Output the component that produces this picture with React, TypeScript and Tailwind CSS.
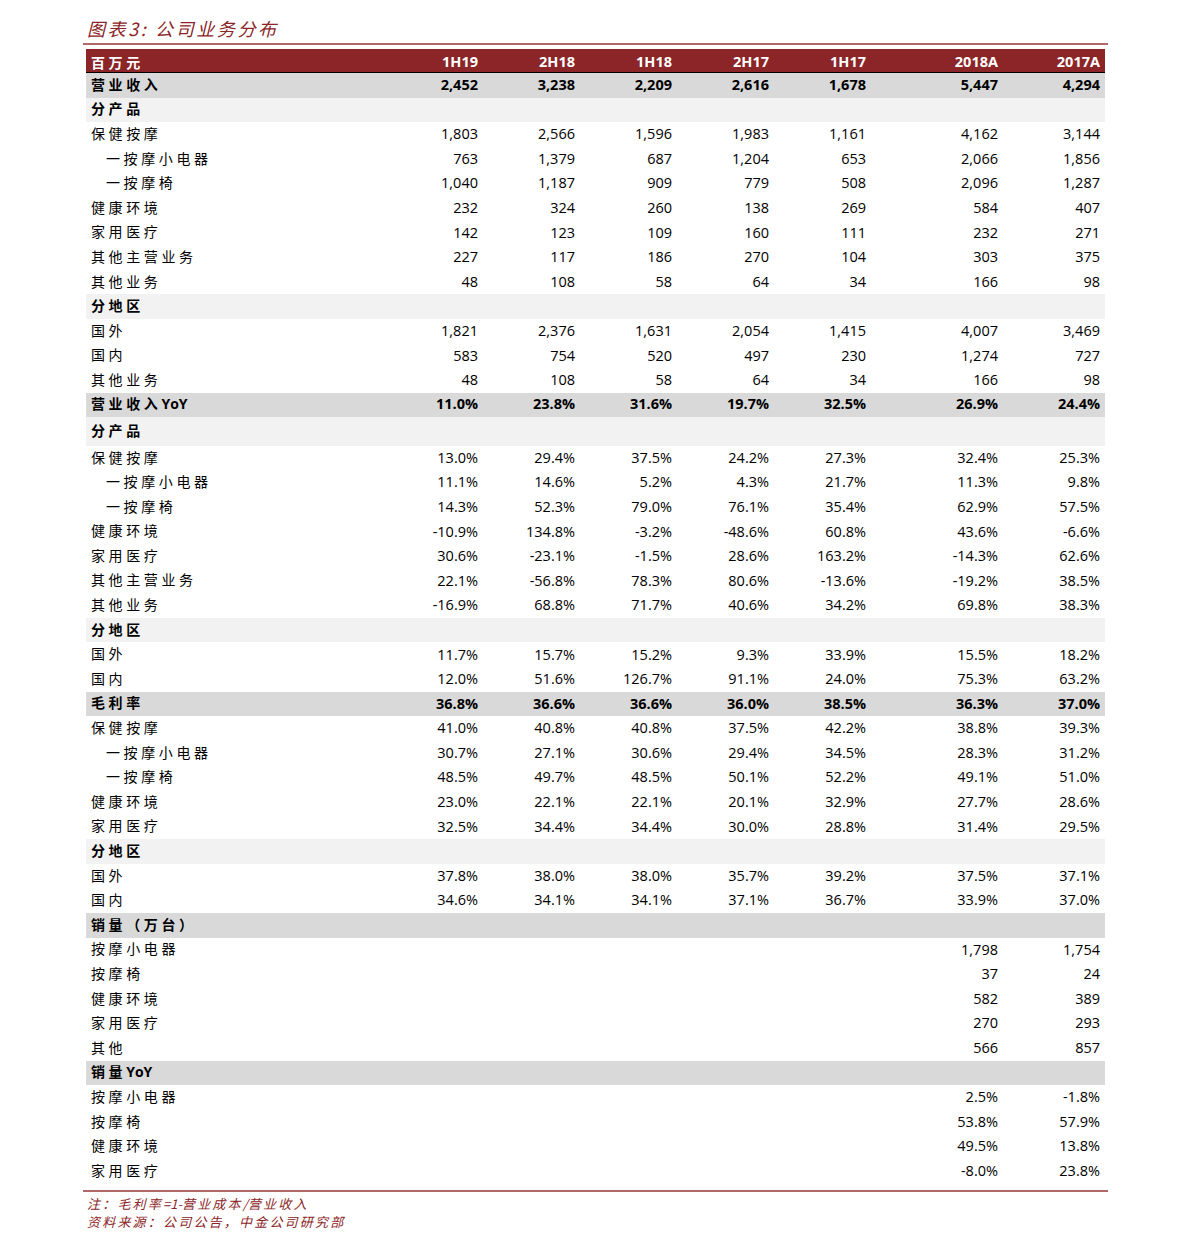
import React from 'react';

type Row = {
  label: string;
  kind: 'main' | 'sub' | 'data';
  vals?: string[];
  indent?: boolean;
  h?: string;
};

const cols = ['1H19', '2H18', '1H18', '2H17', '1H17', '2018A', '2017A'];
const colW = ['w-[97px]', 'w-[97px]', 'w-[97px]', 'w-[97px]', 'w-[97px]', 'w-[132px]', 'w-[102px]'];

const e = (a: string, b: string) => ['', '', '', '', '', a, b];

const rows: Row[] = [
  { label: '营业收入', kind: 'main', vals: ['2,452', '3,238', '2,209', '2,616', '1,678', '5,447', '4,294'] },
  { label: '分产品', kind: 'sub' },
  { label: '保健按摩', kind: 'data', vals: ['1,803', '2,566', '1,596', '1,983', '1,161', '4,162', '3,144'] },
  { label: '一按摩小电器', kind: 'data', indent: true, vals: ['763', '1,379', '687', '1,204', '653', '2,066', '1,856'] },
  { label: '一按摩椅', kind: 'data', indent: true, vals: ['1,040', '1,187', '909', '779', '508', '2,096', '1,287'] },
  { label: '健康环境', kind: 'data', vals: ['232', '324', '260', '138', '269', '584', '407'] },
  { label: '家用医疗', kind: 'data', vals: ['142', '123', '109', '160', '111', '232', '271'] },
  { label: '其他主营业务', kind: 'data', vals: ['227', '117', '186', '270', '104', '303', '375'] },
  { label: '其他业务', kind: 'data', vals: ['48', '108', '58', '64', '34', '166', '98'] },
  { label: '分地区', kind: 'sub' },
  { label: '国外', kind: 'data', vals: ['1,821', '2,376', '1,631', '2,054', '1,415', '4,007', '3,469'] },
  { label: '国内', kind: 'data', vals: ['583', '754', '520', '497', '230', '1,274', '727'] },
  { label: '其他业务', kind: 'data', vals: ['48', '108', '58', '64', '34', '166', '98'] },
  { label: '营业收入YoY', kind: 'main', h: 'h-[24px]', vals: ['11.0%', '23.8%', '31.6%', '19.7%', '32.5%', '26.9%', '24.4%'] },
  { label: '分产品', kind: 'sub', h: 'h-[29px]' },
  { label: '保健按摩', kind: 'data', vals: ['13.0%', '29.4%', '37.5%', '24.2%', '27.3%', '32.4%', '25.3%'] },
  { label: '一按摩小电器', kind: 'data', indent: true, vals: ['11.1%', '14.6%', '5.2%', '4.3%', '21.7%', '11.3%', '9.8%'] },
  { label: '一按摩椅', kind: 'data', indent: true, vals: ['14.3%', '52.3%', '79.0%', '76.1%', '35.4%', '62.9%', '57.5%'] },
  { label: '健康环境', kind: 'data', vals: ['-10.9%', '134.8%', '-3.2%', '-48.6%', '60.8%', '43.6%', '-6.6%'] },
  { label: '家用医疗', kind: 'data', vals: ['30.6%', '-23.1%', '-1.5%', '28.6%', '163.2%', '-14.3%', '62.6%'] },
  { label: '其他主营业务', kind: 'data', vals: ['22.1%', '-56.8%', '78.3%', '80.6%', '-13.6%', '-19.2%', '38.5%'] },
  { label: '其他业务', kind: 'data', vals: ['-16.9%', '68.8%', '71.7%', '40.6%', '34.2%', '69.8%', '38.3%'] },
  { label: '分地区', kind: 'sub' },
  { label: '国外', kind: 'data', vals: ['11.7%', '15.7%', '15.2%', '9.3%', '33.9%', '15.5%', '18.2%'] },
  { label: '国内', kind: 'data', vals: ['12.0%', '51.6%', '126.7%', '91.1%', '24.0%', '75.3%', '63.2%'] },
  { label: '毛利率', kind: 'main', vals: ['36.8%', '36.6%', '36.6%', '36.0%', '38.5%', '36.3%', '37.0%'] },
  { label: '保健按摩', kind: 'data', vals: ['41.0%', '40.8%', '40.8%', '37.5%', '42.2%', '38.8%', '39.3%'] },
  { label: '一按摩小电器', kind: 'data', indent: true, vals: ['30.7%', '27.1%', '30.6%', '29.4%', '34.5%', '28.3%', '31.2%'] },
  { label: '一按摩椅', kind: 'data', indent: true, vals: ['48.5%', '49.7%', '48.5%', '50.1%', '52.2%', '49.1%', '51.0%'] },
  { label: '健康环境', kind: 'data', vals: ['23.0%', '22.1%', '22.1%', '20.1%', '32.9%', '27.7%', '28.6%'] },
  { label: '家用医疗', kind: 'data', vals: ['32.5%', '34.4%', '34.4%', '30.0%', '28.8%', '31.4%', '29.5%'] },
  { label: '分地区', kind: 'sub' },
  { label: '国外', kind: 'data', vals: ['37.8%', '38.0%', '38.0%', '35.7%', '39.2%', '37.5%', '37.1%'] },
  { label: '国内', kind: 'data', vals: ['34.6%', '34.1%', '34.1%', '37.1%', '36.7%', '33.9%', '37.0%'] },
  { label: '销量（万台）', kind: 'main' },
  { label: '按摩小电器', kind: 'data', vals: e('1,798', '1,754') },
  { label: '按摩椅', kind: 'data', vals: e('37', '24') },
  { label: '健康环境', kind: 'data', vals: e('582', '389') },
  { label: '家用医疗', kind: 'data', vals: e('270', '293') },
  { label: '其他', kind: 'data', vals: e('566', '857') },
  { label: '销量YoY', kind: 'main' },
  { label: '按摩小电器', kind: 'data', vals: e('2.5%', '-1.8%') },
  { label: '按摩椅', kind: 'data', vals: e('53.8%', '57.9%') },
  { label: '健康环境', kind: 'data', vals: e('49.5%', '13.8%') },
  { label: '家用医疗', kind: 'data', vals: e('-8.0%', '23.8%') },
];

const cjk = "font-['Noto_Sans_CJK_SC',sans-serif]";
const num = "font-['Open_Sans','Noto_Sans_CJK_SC',sans-serif]";

function TableRow({ row }: { row: Row }) {
  const bg = row.kind === 'main' ? 'bg-[#d9d9d9]' : row.kind === 'sub' ? 'bg-[#f2f2f2]' : 'bg-white';
  const bold = row.kind !== 'data';
  return (
    <div className={`flex items-center ${row.h ?? 'h-[24.6px]'} ${bg} text-black`}>
      <div
        className={`w-[300px] pb-[3px] ${row.indent ? 'pl-[20px]' : 'pl-[5px]'} ${cjk} text-[14px] tracking-[3.6px] leading-none ${
          bold ? 'font-bold' : 'font-normal'
        }`}
      >
        {row.label.endsWith('YoY') ? (
          <>
            {row.label.replace('YoY', '')}
            <span className={`${num} tracking-normal`}>YoY</span>
          </>
        ) : (
          row.label
        )}
      </div>
      {(row.vals ?? ['', '', '', '', '', '', '']).map((v, i) => (
        <div
          key={i}
          className={`${colW[i]} pr-[5px] text-right ${num} text-[14.5px] leading-none ${bold ? 'font-bold' : 'font-normal'}`}
        >
          {v}
        </div>
      ))}
    </div>
  );
}

export default function App() {
  return (
    <div className="min-h-[1247px] w-[1191px] bg-white">
      <div className="pl-[86px] pr-[83px] pt-[15px]">
        <div className={`h-[28px] pl-[1px] ${cjk} text-[18px] italic leading-[26px] tracking-[2.6px] text-[#8b2527]`}>
          图表3: 公司业务分布
        </div>
        <div className="-ml-[3px] h-[2px] bg-[#b06868]" />
        <div className="mt-[4px] w-[1019px]">
          <div className="flex h-[24px] items-center border-b border-black bg-[#8b2527] pt-[3px] text-white">
            <div className={`w-[300px] pl-[5px] ${cjk} text-[14px] font-bold tracking-[3.6px] leading-none`}>百万元</div>
            {cols.map((c, i) => (
              <div key={c} className={`${colW[i]} pr-[5px] text-right ${num} text-[14.5px] font-bold leading-none`}>
                {c}
              </div>
            ))}
          </div>
          {rows.map((r, i) => (
            <TableRow key={i} row={r} />
          ))}
        </div>
        <div className="-ml-[3px] mt-[6px] h-[2px] bg-[#b06868]" />
        <div className={`mt-[3px] pl-[1px] ${cjk} text-[13px] italic leading-[18px] tracking-[2.2px] text-[#8b2527]`}>
          <div>
            注：毛利率<span className="tracking-normal">=1-</span>营业成本<span className="tracking-normal">/</span>营业收入
          </div>
          <div>资料来源：公司公告，中金公司研究部</div>
        </div>
      </div>
    </div>
  );
}
